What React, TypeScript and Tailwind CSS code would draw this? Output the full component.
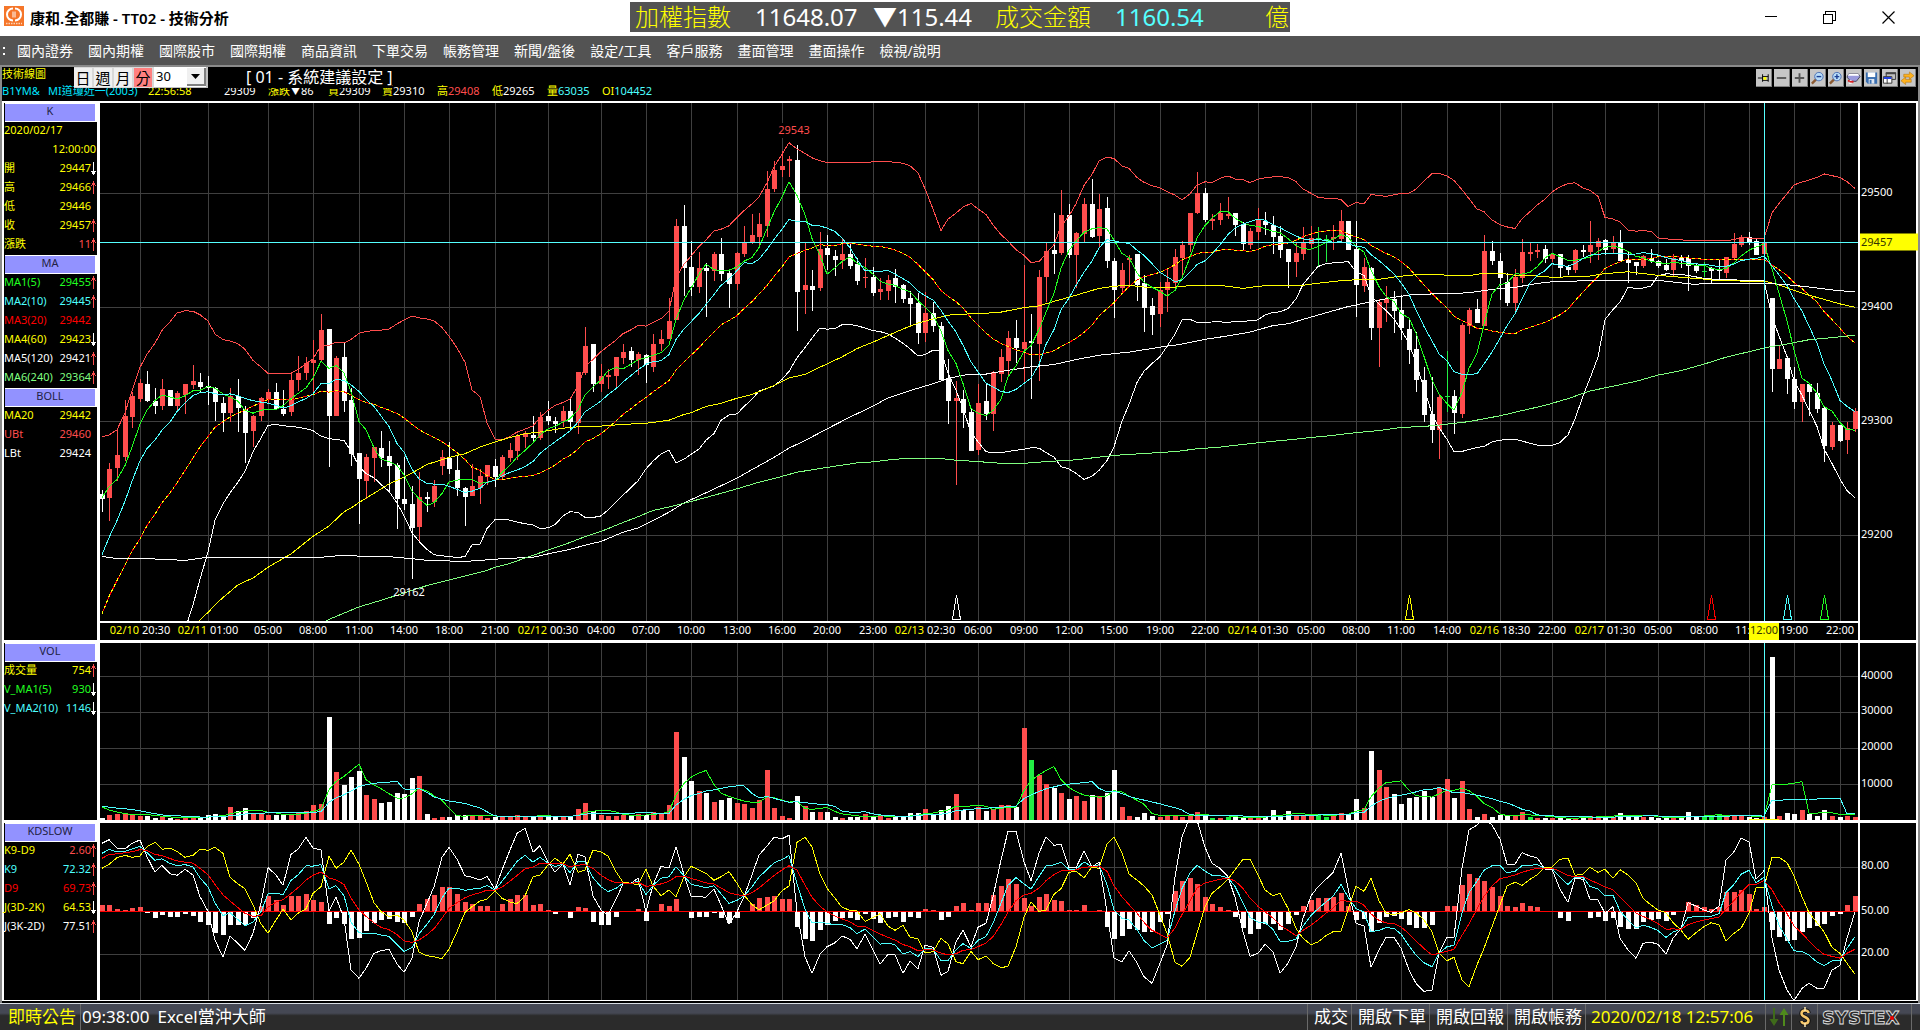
import { useState } from 'react';
import type { ReactNode } from 'react';

type Tone = 'yellow' | 'red' | 'pureRed' | 'green' | 'lime' | 'cyan' | 'white';

const textTone: Record<Tone, string> = {
  yellow: 'text-[#ffff00]',
  red: 'text-[#ff4d4d]',
  pureRed: 'text-[#ff0000]',
  green: 'text-[#20ff20]',
  lime: 'text-[#80ff80]',
  cyan: 'text-[#4dffff]',
  white: 'text-white',
};

const menus = [
  '國內證券', '國內期權', '國際股市', '國際期權', '商品資訊', '下單交易', '帳務管理',
  '新聞/盤後', '設定/工具', '客戶服務', '畫面管理', '畫面操作', '檢視/說明',
];

interface Reading {
  label: string;
  value?: string;
  tone: Tone;
  valueTone?: Tone;
  arrow?: 'up' | 'down';
}

const kReadings: Reading[] = [
  { label: '開', value: '29447', tone: 'yellow', arrow: 'down' },
  { label: '高', value: '29466', tone: 'yellow', arrow: 'up' },
  { label: '低', value: '29446', tone: 'yellow' },
  { label: '收', value: '29457', tone: 'yellow', arrow: 'up' },
  { label: '漲跌', value: '11', tone: 'yellow', valueTone: 'red', arrow: 'up' },
];

const maReadings: Reading[] = [
  { label: 'MA1(5)', value: '29455', tone: 'green', arrow: 'up' },
  { label: 'MA2(10)', value: '29445', tone: 'cyan', arrow: 'up' },
  { label: 'MA3(20)', value: '29442', tone: 'pureRed' },
  { label: 'MA4(60)', value: '29423', tone: 'yellow', arrow: 'down' },
  { label: 'MA5(120)', value: '29421', tone: 'white', arrow: 'up' },
  { label: 'MA6(240)', value: '29364', tone: 'lime', arrow: 'up' },
];

const bollReadings: Reading[] = [
  { label: 'MA20', value: '29442', tone: 'yellow' },
  { label: 'UBt', value: '29460', tone: 'red' },
  { label: 'LBt', value: '29424', tone: 'white' },
];

const volReadings: Reading[] = [
  { label: '成交量', value: '754', tone: 'yellow', arrow: 'up' },
  { label: 'V_MA1(5)', value: '930', tone: 'green', arrow: 'down' },
  { label: 'V_MA2(10)', value: '1146', tone: 'cyan', arrow: 'down' },
];

const kdReadings: Reading[] = [
  { label: 'K9-D9', value: '2.60', tone: 'yellow', valueTone: 'red', arrow: 'up' },
  { label: 'K9', value: '72.32', tone: 'cyan', arrow: 'up' },
  { label: 'D9', value: '69.73', tone: 'pureRed', arrow: 'up' },
  { label: 'J(3D-2K)', value: '64.53', tone: 'yellow', arrow: 'down' },
  { label: 'J(3K-2D)', value: '77.51', tone: 'white', arrow: 'up' },
];

// bar index -> label on the time axis
const timeTicks: { at: number; time: string; date?: string }[] = [
  { at: 5, time: '20:30', date: '02/10' }, { at: 14, time: '01:00', date: '02/11' },
  { at: 22, time: '05:00' }, { at: 28, time: '08:00' }, { at: 34, time: '11:00' },
  { at: 40, time: '14:00' }, { at: 46, time: '18:00' }, { at: 52, time: '21:00' },
  { at: 59, time: '00:30', date: '02/12' }, { at: 66, time: '04:00' }, { at: 72, time: '07:00' },
  { at: 78, time: '10:00' }, { at: 84, time: '13:00' }, { at: 90, time: '16:00' },
  { at: 96, time: '20:00' }, { at: 102, time: '23:00' }, { at: 109, time: '02:30', date: '02/13' },
  { at: 116, time: '06:00' }, { at: 122, time: '09:00' }, { at: 128, time: '12:00' },
  { at: 134, time: '15:00' }, { at: 140, time: '19:00' }, { at: 146, time: '22:00' },
  { at: 153, time: '01:30', date: '02/14' }, { at: 160, time: '05:00' }, { at: 166, time: '08:00' },
  { at: 172, time: '11:00' }, { at: 178, time: '14:00' }, { at: 185, time: '18:30', date: '02/16' },
  { at: 192, time: '22:00' }, { at: 199, time: '01:30', date: '02/17' }, { at: 206, time: '05:00' },
  { at: 212, time: '08:00' }, { at: 218, time: '11:00' }, { at: 224, time: '19:00' },
  { at: 230, time: '22:00' },
];

// One candle per entry: direction, body top, body bottom, high, low.
// Levels count down from the top of the pane, 331 of them to 100 points, 271 = 29500.
const candleData = `
W1143,1158,1133,1196 R1072,1156,1054,1222 R1032,1070,958,1107 R918,1037,870,1047 R860,922,848,952
R822,868,810,878 W825,873,787,876 W873,890,836,912 R839,890,810,900 W842,888,842,890
R852,888,845,900 R826,858,826,912 R816,828,771,838 W820,832,794,848 W831,835,802,886
W835,877,832,932 W881,908,862,964 R861,909,835,935 W860,893,810,964 W896,967,888,1055
R918,961,916,1008 R865,917,862,932 R848,868,840,880 W849,896,823,898 W897,912,843,918
R813,906,795,918 R793,812,742,845 R765,793,745,812 R755,764,697,852 R668,754,621,758
W665,917,665,1066 R749,917,742,917 W746,873,702,906 W871,1027,835,1062 W1025,1102,1025,1230
R1038,1105,1028,1158 R1008,1040,1008,1108 W1010,1040,961,1065 W1035,1062,990,1140 W1061,1158,1055,1246
W1159,1172,1038,1190 W1173,1242,1122,1390 R1153,1240,1080,1285 W1153,1160,1138,1196 R1121,1168,1103,1182
R1038,1062,1016,1088 W1040,1073,994,1085 W1074,1127,1034,1150 W1128,1152,1124,1236 R1121,1149,1058,1150
R1092,1126,1072,1173 R1061,1095,1060,1117 W1063,1095,1042,1123 R1038,1095,1032,1100 R1016,1040,996,1050
R975,1018,970,1045 R966,980,962,1010 W973,982,919,990 R920,981,907,986 W918,931,874,945
W933,941,922,966 R903,933,890,950 W903,934,865,961 R790,937,790,970 R714,793,659,798
W709,824,709,848 R802,824,768,848 R800,804,780,838 R746,801,746,836 R732,749,710,767
W729,755,717,774 R739,756,732,799 W740,771,738,822 R710,774,680,790 R695,710,669,730
R642,693,575,694 R366,640,347,640 W366,488,306,570 W485,543,409,570 R489,542,441,560
W489,497,473,630 R447,497,441,526 W448,504,402,526 W502,534,498,604 R443,534,440,551
R413,447,366,456 R393,413,332,418 R360,399,328,430 R259,366,206,398 R204,258,178,267
R192,203,148,224 R172,177,163,224 W175,558,131,671 R538,551,415,621 W539,551,494,613
R433,547,384,554 W430,450,392,495 W453,465,436,512 R447,466,405,490 W447,482,415,490
W476,526,460,538 R514,518,460,547 W514,560,485,569 R549,559,518,580 R523,555,508,580
W517,543,491,589 W537,577,534,590 W575,592,556,653 W590,677,560,710 R618,677,557,703
W618,656,587,674 W657,813,645,815 W807,874,752,941 R865,874,816,1117 W868,909,843,952
W906,1018,895,1018 R880,1016,824,1030 W874,912,822,928 R790,912,786,961 R746,795,723,820
R691,758,672,798 W691,720,638,765 R703,723,479,820 W700,706,621,868 R514,709,495,816
R438,514,416,587 W435,447,328,505 R334,444,261,450 W334,450,303,460 R386,450,383,547
R302,389,285,412 W302,398,229,402 R317,395,273,430 W314,467,281,488 W467,551,460,633
R494,546,473,560 R460,464,450,544 W447,537,447,584 W532,604,508,674 W598,624,575,683
R553,621,528,659 R528,551,490,616 R456,531,433,545 R421,459,409,512 R328,421,328,441
R270,328,209,330 W270,348,256,354 R346,350,331,378 R328,348,298,363 R330,337,282,345
W328,363,328,395 W360,418,354,437 R380,421,372,433 R346,383,314,406 W351,363,325,392
W363,398,337,447 W395,437,366,459 W433,470,433,546 R444,470,415,514 R413,446,369,464
R401,418,366,433 G402,403,369,484 G404,405,392,470 R398,405,363,436 R351,403,319,412
W351,436,351,436 W433,537,351,630 R486,540,459,558 W488,662,485,697 R588,661,578,775
R578,589,540,645 W578,612,555,677 W610,661,567,697 W665,725,633,767 W723,812,674,848
W813,914,775,935 W912,958,804,996 R862,958,855,1042 G861,862,729,906 W859,909,842,970
R653,911,648,923 R610,655,604,680 W607,648,577,648 R438,656,392,656 W438,467,409,480
W467,517,444,581 W528,589,502,598 R514,589,490,615 R441,517,404,531 R441,446,415,467
R437,440,418,459 W433,462,420,473 R447,462,445,470 W448,487,448,515 W486,494,479,508
R436,494,434,502 W436,440,421,456 R421,441,351,473 R409,428,402,465 W407,436,404,450
R413,433,395,444 W413,467,377,470 W463,473,441,531 W471,482,470,508 R453,482,450,488
W459,468,433,473 W467,482,465,488 W479,494,462,497 R459,494,447,511 W459,467,450,488
W458,482,450,555 W479,497,477,502 G497,498,470,514 W488,497,485,531 W491,497,462,525
R456,502,455,517 R418,459,386,462 R398,420,392,428 W398,412,383,421 W410,450,404,450
R413,447,413,455 W575,780,575,848 R752,780,714,780 W749,809,742,854 W810,877,775,897
R825,877,825,935 W825,848,822,918 W851,897,822,909 W894,1004,891,1051 R944,1007,935,1016
W944,990,944,993 R952,987,935,1028 R903,955,894,964`;

const candles = candleData.trim().split(/\s+/).map((entry) => {
  const [top, bottom, high, low] = entry.slice(1).split(',').map(Number);
  return { dir: entry[0], top, bottom, high, low, close: entry[0] === 'W' ? bottom : top };
});

// closes of the sessions before the first visible candle
const earlierCloses = [
  2080, 1960, 1800, 1680, 1545, 1640, 1560, 1500, 1450, 1431,
  1560, 1530, 1480, 1440, 1415, 1230, 1140, 1120, 1127,
];

// slow averages, sampled as [bar, level]
type Sample = [number, number];

const ma60: Sample[] = [
  [12.8, 1512], [14, 1488], [15.5, 1455], [18, 1408], [20, 1388], [22, 1357], [25, 1318], [28, 1267],
  [30, 1237], [32, 1196], [33, 1185], [34, 1169], [36, 1142], [38, 1115], [40, 1095], [42, 1072],
  [43, 1058], [44, 1052], [46, 1038], [48, 1027], [50, 1008], [52, 993], [54, 980], [56, 969],
  [58, 964], [61, 953], [63, 949], [66, 947], [69, 942], [72, 939], [74, 933], [75, 930], [77, 913],
  [78, 908], [80, 890], [82, 881], [84, 866], [86, 855], [88, 838], [90, 818], [91, 807], [93, 797],
  [95, 776], [98, 746], [100, 722], [102, 703], [104, 684], [106, 665], [108, 648], [110, 636],
  [112, 625], [113, 622], [116, 621], [119, 616], [122, 603], [124, 598], [126, 585], [128, 573],
  [130, 560], [132, 547], [134, 541], [136, 538], [138, 543], [141, 546], [143, 541], [145, 538],
  [148, 538], [151, 547], [153, 541], [155, 538], [159, 538], [161, 532], [163, 527], [165, 523],
  [169, 521], [171, 514], [173, 509], [175, 506], [177, 508], [181, 510], [183, 503], [185, 503],
  [187, 509], [190, 511], [192, 515], [195, 513], [197, 511], [199, 504], [202, 499], [204, 504],
  [206, 509], [209, 515], [212, 520], [214, 525], [218, 526], [220, 526], [222, 537], [224, 553],
  [226, 567], [228, 579], [230, 592], [232, 602],
];

const ma120: Sample[] = [
  [0, 1325], [2, 1332], [4, 1331], [7, 1333], [11, 1337], [13, 1331], [14, 1328], [29, 1328],
  [32, 1322], [35, 1326], [38, 1326], [41, 1332], [43, 1337], [48, 1340], [50, 1337], [53, 1332],
  [57, 1328], [59, 1318], [62, 1305], [64, 1293], [66, 1282], [69, 1255], [71, 1243], [73, 1221],
  [75, 1197], [77, 1170], [79, 1150], [81, 1130], [84, 1098], [87, 1062], [89, 1038], [91, 1011],
  [93, 989], [96, 955], [99, 921], [102, 889], [104, 865], [107, 844], [110, 824], [112, 809],
  [114, 799], [117, 796], [120, 785], [123, 775], [126, 768], [129, 754], [132, 741], [136, 732],
  [140, 718], [143, 709], [146, 695], [149, 685], [152, 674], [155, 655], [157, 650], [159, 637],
  [162, 618], [165, 600], [168, 586], [171, 573], [174, 564], [177, 563], [181, 560], [184, 550],
  [187, 544], [190, 533], [192, 528], [195, 526], [197, 524], [206, 524], [209, 531], [211, 536],
  [212, 532], [220, 532], [224, 538], [227, 546], [230, 554], [232, 556],
];

const ma240: Sample[] = [
  [29.7, 1512], [32, 1490], [34, 1472], [37, 1453], [40, 1432], [43, 1410], [46, 1394], [49, 1377],
  [51, 1366], [52, 1357], [54, 1346], [56, 1330], [59, 1307], [62, 1285], [64, 1268], [66, 1253],
  [68, 1235], [71, 1210], [73, 1192], [75, 1182], [78, 1166], [81, 1148], [84, 1129], [87, 1110],
  [90, 1093], [92, 1081], [96, 1067], [100, 1054], [102, 1051], [105, 1043], [108, 1040],
  [111, 1041], [113, 1046], [116, 1050], [119, 1055], [122, 1055], [125, 1050], [129, 1045],
  [134, 1032], [139, 1025], [142, 1021], [145, 1013], [148, 1008], [151, 1000], [155, 991],
  [157, 987], [160, 980], [163, 974], [166, 966], [169, 960], [172, 951], [175, 948], [177, 944],
  [181, 934], [185, 917], [188, 902], [191, 887], [194, 867], [197, 845], [200, 831], [203, 817],
  [206, 799], [209, 786], [212, 767], [215, 747], [218, 731], [220, 720], [223, 709], [226, 696],
  [229, 690], [232, 683],
];

// volume, 108 = 10000 lots
const volumes = [
  6, 16, 19, 22, 16, 12, 12, 7, 10, 5, 4, 9, 6, 9, 16, 19, 12, 40, 28, 37, 19, 19, 14, 16, 16,
  18, 22, 28, 46, 49, 310, 145, 106, 130, 147, 76, 64, 52, 55, 82, 77, 127, 133, 19, 7, 9, 10, 16, 16, 16,
  12, 7, 10, 8, 9, 16, 10, 12, 16, 9, 9, 9, 10, 34, 52, 28, 16, 13, 13, 16, 12, 18, 16, 25, 22,
  46, 265, 190, 118, 88, 82, 55, 61, 67, 52, 49, 37, 61, 151, 37, 13, 7, 73, 43, 25, 25, 25, 10, 7, 9,
  10, 19, 10, 13, 7, 10, 8, 22, 22, 34, 19, 31, 43, 79, 31, 28, 40, 28, 34, 46, 46, 40, 277, 181, 136,
  109, 97, 82, 64, 73, 58, 76, 73, 82, 151, 40, 13, 10, 22, 13, 10, 13, 16, 10, 13, 25, 16, 6, 7, 9,
  10, 8, 5, 9, 10, 31, 10, 28, 13, 13, 13, 19, 10, 16, 22, 19, 64, 37, 208, 151, 100, 79, 49, 67, 70,
  88, 70, 97, 124, 67, 118, 34, 10, 19, 10, 16, 13, 13, 25, 10, 7, 5, 5, 7, 5, 6, 9, 13, 13, 13,
  9, 22, 16, 10, 8, 10, 6, 6, 7, 7, 25, 8, 13, 16, 19, 10, 12, 13, 10, 5, 8, 490, 13, 22, 19,
  31, 19, 13, 31, 13, 10, 13, 10,
];
const earlierVolumes = [45, 45, 45, 38, 45, 60, 50, 45, 34];
const flatVolumeBars = new Set([123, 147, 149, 161, 162, 189, 212, 213, 214]);

// KD oscillator: J(3K-2D) and J(3D-2K); 904 is the 50 line, 4.35 per point
const jFast = [
  700, 689, 714, 717, 700, 690, 740, 787, 766, 791, 796, 778, 795, 860, 904, 990, 1042, 979, 1000, 1021,
  970, 880, 773, 795, 826, 733, 718, 682, 714, 720, 902, 862, 925, 1080, 1105, 1075, 1030, 1022, 1018, 1062,
  1087, 1045, 935, 880, 830, 742, 712, 748, 797, 802, 810, 799, 838, 780, 720, 670, 655, 727, 707, 755,
  787, 762, 825, 733, 740, 858, 900, 916, 868, 822, 820, 805, 905, 825, 769, 774, 710, 795, 859, 860,
  862, 838, 885, 943, 905, 860, 795, 735, 708, 682, 686, 676, 905, 1040, 1090, 1033, 1010, 998, 978, 988,
  1016, 973, 1020, 1063, 1033, 1034, 1090, 1053, 1076, 1006, 1012, 1096, 1084, 995, 961, 1010, 952, 940, 860, 750,
  664, 664, 755, 812, 730, 680, 706, 703, 773, 773, 724, 770, 757, 905, 1045, 1055, 1022, 1058, 1100, 1120,
  1060, 1005, 800, 680, 620, 630, 712, 760, 775, 800, 862, 965, 1039, 1030, 1003, 1025, 1090, 1060, 1010, 925,
  858, 830, 808, 788, 730, 835, 940, 948, 1072, 1020, 982, 982, 1015, 1080, 1120, 1144, 1140, 1030, 982, 982,
  775, 660, 645, 625, 645, 688, 762, 762, 728, 738, 743, 778, 778, 838, 877, 805, 808, 868, 870, 910,
  890, 985, 1020, 1045, 1000, 997, 1003, 1032, 985, 955, 878, 888, 900, 907, 888, 750, 725, 685, 695, 808,
  782, 985, 1080, 1140, 1172, 1135, 1120, 1135, 1135, 1080, 1066, 985, 905,
];
const jSlow = [
  775, 763, 743, 736, 742, 738, 710, 697, 718, 715, 724, 742, 736, 718, 721, 712, 730, 802, 822, 836,
  885, 942, 970, 930, 898, 929, 910, 896, 850, 830, 738, 775, 756, 720, 763, 815, 878, 905, 920, 915,
  930, 965, 1027, 1037, 1040, 1046, 1017, 965, 907, 890, 873, 868, 842, 865, 876, 881, 858, 800, 795, 765,
  745, 762, 733, 787, 780, 720, 726, 738, 785, 817, 820, 825, 778, 828, 857, 840, 860, 800, 769, 780,
  790, 811, 800, 785, 820, 855, 884, 900, 885, 873, 842, 828, 697, 682, 710, 793, 835, 865, 892, 901,
  903, 934, 923, 911, 948, 961, 946, 982, 986, 1028, 1025, 985, 1002, 1055, 1061, 1024, 1049, 1038, 1060, 1073,
  1069, 1010, 922, 875, 904, 900, 853, 836, 787, 784, 803, 771, 775, 703, 682, 730, 792, 810, 828, 855,
  915, 970, 1057, 1069, 1042, 970, 890, 850, 830, 808, 780, 748, 748, 795, 840, 857, 850, 895, 955, 985,
  1004, 996, 977, 965, 964, 900, 829, 844, 805, 872, 910, 914, 908, 899, 908, 930, 965, 1030, 1052, 1042,
  1110, 1130, 1065, 1015, 950, 885, 828, 817, 826, 808, 795, 772, 772, 748, 744, 796, 793, 772, 787, 778,
  805, 779, 795, 818, 865, 885, 900, 908, 938, 960, 988, 968, 950, 938, 944, 994, 970, 955, 910, 834,
  832, 742, 742, 758, 798, 860, 908, 938, 965, 1012, 1030, 1060, 1093,
];

const PLOT_W = 1758;
const CURSOR = 220;

const barX = (i: number) => Math.round(1.9 + i * 7.555);
const priceY = (level: number) => level / 2.904 - 3;
const volumeY = (v: number) => 177 - v / 3;
const kdY = (level: number) => level / 3 - 213;

const toPoints = (values: number[], y: (v: number) => number) =>
  values.map((v, i) => `${barX(i)},${y(v).toFixed(1)}`).join(' ');

const samplePoints = (samples: Sample[]) =>
  samples.map(([i, v]) => `${barX(i)},${priceY(v).toFixed(1)}`).join(' ');

function average(values: number[], earlier: number[], span: number) {
  const all = [...earlier, ...values];
  return values.map((_, i) => {
    const end = i + earlier.length + 1;
    const part = all.slice(Math.max(0, end - span), end);
    return part.reduce((a, b) => a + b, 0) / part.length;
  });
}

function deviation(values: number[], earlier: number[], span: number) {
  const all = [...earlier, ...values];
  return values.map((_, i) => {
    const part = all.slice(i + earlier.length + 1 - span, i + earlier.length + 1);
    const mean = part.reduce((a, b) => a + b, 0) / part.length;
    return Math.sqrt(part.reduce((a, b) => a + (b - mean) ** 2, 0) / part.length);
  });
}

const closes = candles.map((c) => c.close);
const ma5 = average(closes, earlierCloses, 5);
const ma10 = average(closes, earlierCloses, 10);
const ma20 = average(closes, earlierCloses, 20);
const sd20 = deviation(closes, earlierCloses, 20);
const upperBand = ma20.map((m, i) => m - 2 * sd20[i]);
const lowerBand = ma20.map((m, i) => m + 2 * sd20[i]);

const kLine = jFast.map((j, i) => (3 * j + 2 * jSlow[i]) / 5);
const dLine = jFast.map((j, i) => (2 * j + 3 * jSlow[i]) / 5);
const kdGap = jFast.map((j, i) => ((jSlow[i] - j) / 5) * 1.17);

const fills: Record<string, string> = { R: '#ff4d4d', W: '#ffffff', G: '#22ee44' };

function Line({ points, color, dash }: { points: string; color: string; dash?: string }) {
  return <polyline points={points} fill="none" stroke={color} strokeDasharray={dash} />;
}

function Plot({ height, levels, children }: { height: number; levels: number[]; children: ReactNode }) {
  return (
    <svg
      viewBox={`0 0 ${PLOT_W} ${height}`}
      preserveAspectRatio="none"
      shapeRendering="crispEdges"
      className="absolute inset-0 block h-full w-full"
    >
      {timeTicks.map((t) => (
        <rect key={t.at} x={barX(t.at)} y={0} width={1} height={height} fill="#3f3f3f" />
      ))}
      {levels.map((y) => (
        <rect key={y} x={0} y={y} width={PLOT_W} height={1} fill="#3f3f3f" />
      ))}
      {children}
      <rect x={barX(CURSOR)} y={0} width={1} height={height} fill="#55ffff" />
    </svg>
  );
}

const signals: [number, string][] = [
  [113, '#ffffff'], [173, '#ffff00'], [213, '#ff0000'], [223, '#4dffff'], [228, '#20ff20'],
];

function PricePlot() {
  return (
    <Plot height={518} levels={[90, 204, 318, 432]}>
      <rect x={678} y={20} width={32} height={15} fill="#000" />
      <rect x={294} y={482} width={32} height={15} fill="#000" />
      {candles.map((c, i) => (
        <g key={i} fill={fills[c.dir]}>
          <rect x={barX(i)} y={priceY(c.high)} width={1} height={(c.low - c.high) / 2.904} />
          <rect x={barX(i) - 2} y={priceY(c.top)} width={5} height={Math.max(1, (c.bottom - c.top) / 2.904)} />
        </g>
      ))}
      <Line points={toPoints(ma20, priceY)} color="#ff0000" />
      <Line points={toPoints(ma20, priceY)} color="#ffff00" dash="3 3" />
      <Line points={toPoints(upperBand, priceY)} color="#ff4d4d" />
      <Line points={toPoints(lowerBand, priceY)} color="#ffffff" />
      <Line points={samplePoints(ma60)} color="#ffff00" />
      <Line points={samplePoints(ma120)} color="#ffffff" />
      <Line points={samplePoints(ma240)} color="#80ff80" />
      <Line points={toPoints(ma5, priceY)} color="#20ff20" />
      <Line points={toPoints(ma10, priceY)} color="#4dffff" />
      {signals.map(([at, color]) => (
        <path
          key={at}
          d={`M${barX(at) + 0.5} 492 L${barX(at) - 3.5} 516.5 H${barX(at) + 4.5} Z`}
          fill="none"
          stroke={color}
        />
      ))}
      <rect x={0} y={139} width={PLOT_W} height={1} fill="#55ffff" />
      <text x={694} y={31} textAnchor="middle" fontSize={11} fill="#ff4d4d">29543</text>
      <text x={309} y={493} textAnchor="middle" fontSize={11} fill="#ffffff">29162</text>
    </Plot>
  );
}

function VolumePlot() {
  return (
    <Plot height={177} levels={[33, 69, 105, 141]}>
      {volumes.map((v, i) => (
        <rect
          key={i}
          x={barX(i) - 2}
          y={volumeY(v)}
          width={5}
          height={v / 3}
          fill={fills[flatVolumeBars.has(i) ? 'G' : candles[i].dir === 'G' ? 'R' : candles[i].dir]}
        />
      ))}
      <Line points={toPoints(average(volumes, earlierVolumes, 5), volumeY)} color="#20ff20" />
      <Line points={toPoints(average(volumes, earlierVolumes, 10), volumeY)} color="#4dffff" />
      <rect x={barX(CURSOR) - 15} y={176} width={30} height={1} fill="#ffff00" />
    </Plot>
  );
}

function KdPlot() {
  return (
    <Plot height={177} levels={[44, 131]}>
      {kdGap.map((gap, i) => (
        <rect
          key={i}
          x={barX(i) - 2}
          y={gap > 0 ? 88 - gap / 3 : 88}
          width={5}
          height={Math.abs(gap) / 3}
          fill={gap > 0 ? '#ff4d4d' : '#ffffff'}
        />
      ))}
      <rect x={0} y={88} width={PLOT_W} height={1} fill="#ff0000" />
      <Line points={toPoints(jSlow, kdY)} color="#ffff00" />
      <Line points={toPoints(jFast, kdY)} color="#ffffff" />
      <Line points={toPoints(kLine, kdY)} color="#4dffff" />
      <Line points={toPoints(dLine, kdY)} color="#ff0000" />
    </Plot>
  );
}

function TrendArrow({ dir }: { dir: 'up' | 'down' }) {
  return dir === 'up' ? (
    <svg width="5" height="13" viewBox="0 0 5 13" fill="#ff4d4d" shapeRendering="crispEdges">
      <path d="M2 0h1v13H2zM1 2h3v2H1zM0 4h1v1H0zM4 4h1v1H4z" />
    </svg>
  ) : (
    <svg width="5" height="13" viewBox="0 0 5 13" fill="#fff" shapeRendering="crispEdges">
      <path d="M2 0h1v13H2zM1 10h3v2H1zM0 9h5v1H0z" />
    </svg>
  );
}

function Section({ title, readings, children }: { title: string; readings: Reading[]; children?: ReactNode }) {
  return (
    <section>
      <h2 className="ml-px h-[19px] border-y border-r-2 border-white bg-[#9292ff] text-center text-[11px] leading-[13px] text-[#222244]">
        {title}
      </h2>
      {children}
      <table className="w-full border-collapse text-[11px] leading-[16px]">
        <tbody>
          {readings.map((r) => (
            <tr key={r.label} className="h-[19px] align-top">
              <th scope="row" className={`p-0 text-left font-normal whitespace-nowrap ${textTone[r.tone]}`}>{r.label}</th>
              <td className={`p-0 text-right ${textTone[r.valueTone ?? r.tone]}`}>{r.value}</td>
              <td className="w-[6px] p-0 pt-[2px]">{r.arrow && <TrendArrow dir={r.arrow} />}</td>
            </tr>
          ))}
        </tbody>
      </table>
    </section>
  );
}

function AxisLabel({ top, children }: { top: string; children: ReactNode }) {
  return <span className={`absolute left-px -translate-y-1/2 ${top}`}>{children}</span>;
}

function ToolButton({ label, children }: { label: string; children: ReactNode }) {
  return (
    <button type="button" aria-label={label} className="h-[18px] w-4 border-r border-b border-[#808080] bg-[#c6c6c6]">
      <svg viewBox="0 0 16 16" className="block h-4 w-[15px]">{children}</svg>
    </button>
  );
}

function Toolbar() {
  const [period, setPeriod] = useState('分');
  return (
    <div className="relative z-10 flex h-[21px] items-start">
      <span className="w-[72px] text-[11px] leading-[14px] text-[#ffff00]">技術線圖</span>
      <div className="flex h-[21px] items-center gap-[2px] bg-[#d8d8d8] pr-[2px]">
        {['日', '週', '月', '分'].map((p) => (
          <button
            key={p}
            type="button"
            aria-pressed={period === p}
            onClick={() => setPeriod(p)}
            className={`h-[19px] w-[18px] text-center text-[15px] leading-[18px] text-black ${
              period === p ? 'bg-[#ff8080]' : 'bg-[#f0f0f0]'
            }`}
          >
            {p}
          </button>
        ))}
      </div>
      <div className="relative h-[21px] w-[54px] border-r-2 border-b border-[#c0c0c0] bg-white">
        <select
          aria-label="分鐘"
          defaultValue="30"
          className="block h-[20px] w-full appearance-none bg-transparent pb-[2px] pl-[2px] text-[13px] leading-[18px] text-black"
        >
          <option>5</option>
          <option>15</option>
          <option>30</option>
          <option>60</option>
        </select>
        <span className="pointer-events-none absolute top-px right-0 flex h-[18px] w-[19px] items-center justify-center border-r-2 border-b-2 border-[#808080] bg-[#f0f0f0]">
          <svg width="9" height="5" viewBox="0 0 9 5"><path d="M0 0h9L4.5 5z" /></svg>
        </span>
      </div>
      <h1 className="h-[21px] w-[184px] bg-black pl-[38px] text-[16px] leading-[21px] whitespace-nowrap text-white">
        [ 01 - 系統建議設定 ]
      </h1>
      <div className="ml-auto flex gap-[2px] pt-[2px] pr-[2px]">
        <ToolButton label="釘選">
          <path d="M2 8h5M7 4v8M13 4v8M7 6.5h6M7 10.5h6" stroke="#000" fill="none" />
          <path d="M8 7h3v3H8z" fill="#ff0" />
        </ToolButton>
        <ToolButton label="縮短"><path d="M3 7h10v2H3z" fill="#555" /></ToolButton>
        <ToolButton label="加長"><path d="M3 7h10v2H3zM7 3h2v10H7z" fill="#555" /></ToolButton>
        <ToolButton label="縮小">
          <path d="M2 14l5-5" stroke="#8b5a33" strokeWidth="2.5" />
          <circle cx="9.5" cy="6.5" r="4.5" fill="#b8dcf8" stroke="#4a6fb5" />
          <path d="M7 6.5h5" stroke="#1c3f94" strokeWidth="1.5" />
        </ToolButton>
        <ToolButton label="放大">
          <path d="M2 14l5-5" stroke="#8b5a33" strokeWidth="2.5" />
          <circle cx="9.5" cy="6.5" r="4.5" fill="#b8dcf8" stroke="#4a6fb5" />
          <path d="M7 6.5h5M9.5 4v5" stroke="#1c3f94" strokeWidth="1.5" />
        </ToolButton>
        <ToolButton label="清除">
          <path d="M3 3.500h10l2 3-4 5H5L1 7z" fill="#9a9adc" stroke="#445" />
          <path d="M3 3.500h10l1 2H2z" fill="#fff" />
          <path d="M2 10h2v1h2v2H4v-1H2zM6 11h2v2H6z" fill="#d22" />
          <path d="M4 10h2v1H4zM3 13h3v1H3z" fill="#fff" />
        </ToolButton>
        <ToolButton label="儲存">
          <path d="M2 2h12v12H4l-2-2z" fill="#3a6fb0" />
          <path d="M4 2h8v5H4z" fill="#fff" />
          <path d="M5 9h6v5H5z" fill="#dde6f2" />
          <path d="M6 10h2v4H6z" fill="#3a6fb0" />
        </ToolButton>
        <ToolButton label="視窗">
          <path d="M4.5 2.5h10v7h-10z" fill="#c0c0c0" stroke="#333" />
          <path d="M4 2h11v2H4z" fill="#444" />
          <path d="M1.5 6.5h9v7h-9z" fill="#fff" stroke="#333" />
          <path d="M2 7h8v2H2z" fill="#1536e0" />
          <path d="M5.5 9v5" stroke="#333" />
        </ToolButton>
        <ToolButton label="切換">
          <path d="M4 4h6V1.5l5 4-5 4V7H4z" fill="#ffb21e" stroke="#a86800" strokeWidth="0.5" />
          <path d="M12 9.500H6V7l-5 4 5 4v-2.500h6z" fill="#ffb21e" stroke="#a86800" strokeWidth="0.5" />
        </ToolButton>
      </div>
    </div>
  );
}

function QuoteRow() {
  return (
    <div className="-mt-[5px] flex h-[18px] text-[11px] leading-[15px] whitespace-nowrap text-white">
      <span className="w-[46px] text-[#00e5ff]">B1YM&amp;</span>
      <span className="w-[100px] text-[#00e5ff]">MI道瓊近一(2003)</span>
      <span className="w-[76px] text-[#ffff00]">22:56:58</span>
      <span className="w-11">29309</span>
      <span className="w-[60px]"><b className="font-normal text-[#ffff00]">漲跌</b>▼86</span>
      <span className="w-[54px]"><b className="font-normal text-[#ffff00]">買</b>29309</span>
      <span className="w-[55px]"><b className="font-normal text-[#ffff00]">賣</b>29310</span>
      <span className="w-[55px] text-[#ff4d4d]"><b className="font-normal text-[#ffff00]">高</b>29408</span>
      <span className="w-[55px]"><b className="font-normal text-[#ffff00]">低</b>29265</span>
      <span className="w-[55px] text-[#4dffff]"><b className="font-normal text-[#ffff00]">量</b>63035</span>
      <span className="text-[#4dffff]"><b className="font-normal text-[#ffff00]">OI</b>104452</span>
    </div>
  );
}

function StatusBar() {
  const divider = 'border-l border-[#6a6a6a] pl-[6px]';
  return (
    <footer className="flex h-[26px] items-center bg-linear-to-b from-[#454854] from-35% to-[#2b2b2b] to-45% text-[17px] leading-[26px] whitespace-nowrap text-white">
      <span className="w-20 pl-2 text-[#ffff00]">即時公告</span>
      <span className="border-l border-[#6a6a6a] pl-px">09:38:00</span>
      <span className="pl-2">Excel當沖大師</span>
      <div className="ml-auto flex">
        <button type="button" className={`w-11 text-left ${divider}`}>成交</button>
        <button type="button" className={`w-[78px] text-left ${divider}`}>開啟下單</button>
        <button type="button" className={`w-[78px] text-left ${divider}`}>開啟回報</button>
        <button type="button" className={`w-[78px] text-left ${divider}`}>開啟帳務</button>
        <time className="w-[180px] border-l border-[#6a6a6a] pl-[5px] text-[#ffff00]">2020/02/18 12:57:06</time>
        <span className="flex w-[26px] items-center justify-center border-l border-[#6a6a6a]">
          <svg width="20" height="20" viewBox="0 0 20 20" fill="#4f8a1c">
            <path d="M4 1h2v11h3.500L5 19 .5 12H4z" fill="#3f6b1a" />
            <path d="M14 19h2V8h3.500L15 1l-4.500 7H14z" />
          </svg>
        </span>
        <span className="flex w-[26px] items-center justify-center border-l border-[#6a6a6a]">
          <svg width="12" height="20" viewBox="0 0 12 20" fill="none">
            <path d="M9.500 6C9.500 2.500 2.500 2.500 2.500 6.500S9.500 9.500 9.500 13.500 2.500 17.500 2.500 14" stroke="#111" strokeWidth="4.5" />
            <path d="M9.500 6C9.500 2.500 2.500 2.500 2.500 6.500S9.500 9.500 9.500 13.500 2.500 17.500 2.500 14" stroke="#f5c66a" strokeWidth="2.5" />
            <path d="M6 0v4M6 16v4" stroke="#ffe9b0" strokeWidth="1.5" />
          </svg>
        </span>
        <span className="w-[94px] border-l border-[#6a6a6a]">
          <svg width="88" height="26" viewBox="0 0 88 26" className="ml-1 block">
            <text x="0" y="20" fontSize="18" fontWeight="700" fill="#2b2b2b" stroke="#e8e8e8" strokeWidth="0.8" className="font-['DejaVu_Sans',sans-serif]">
              SYSTEX
            </text>
            <circle cx="70" cy="14" r="2" fill="#e00" />
          </svg>
        </span>
        <span className="w-[9px] border-l border-[#6a6a6a]" />
      </div>
    </footer>
  );
}

export default function App() {
  return (
    <div className="flex h-screen min-h-[600px] flex-col overflow-hidden bg-black font-['Noto_Sans','Noto_Sans_CJK_TC',sans-serif]">
      <header className="relative flex h-9 shrink-0 items-center bg-white">
        <svg width="20" height="20" viewBox="0 0 20 20" className="-mt-1 ml-1">
          <rect width="20" height="20" fill="#f5762a" />
          <path d="M9 2.500a6 6 0 0 0 0 12M11 2.500a6 6 0 0 1 0 12" fill="none" stroke="#fff" strokeWidth="2" />
          <path d="M9 5.500v6M11 5.500v6" stroke="#fff" strokeWidth="1" />
          <path d="M2 17.500h16" stroke="#fbd3b8" strokeWidth="1.5" strokeDasharray="1.5 1" />
        </svg>
        <p className="ml-[6px] text-[15px] font-semibold text-black">康和.全都賺 - TT02 - 技術分析</p>
        <div className="absolute top-[2px] left-1/2 flex h-[30px] w-[660px] -translate-x-1/2 items-center bg-[#535353] pr-px pl-[5px] text-[24px] leading-[30px] whitespace-nowrap text-white">
          <span className="w-[120px] font-light text-[#ffff00]">加權指數</span>
          <span className="w-[118px]">11648.07</span>
          <span className="w-[122px]">▼115.44</span>
          <span className="w-[120px] font-light text-[#ffff00]">成交金額</span>
          <span className="text-[#55ffff]">1160.54</span>
          <span className="ml-auto font-light text-[#ffff00]">億</span>
        </div>
        <div className="ml-auto flex items-center pr-[2px]">
          <button type="button" aria-label="最小化" className="flex h-8 w-[58px] items-center justify-center">
            <svg width="12" height="12" viewBox="0 0 12 12" shapeRendering="crispEdges"><path d="M0 4h12v1H0z" /></svg>
          </button>
          <button type="button" aria-label="還原" className="-mt-[2px] flex h-8 w-[58px] items-center justify-center">
            <svg width="13" height="13" viewBox="0 0 13 13" fill="none" stroke="#000" shapeRendering="crispEdges">
              <path d="M.5 3.500h9v9h-9zM2.500 3V.5h10v9H10" />
            </svg>
          </button>
          <button type="button" aria-label="關閉" className="-mt-[2px] flex h-8 w-[60px] items-center justify-center">
            <svg width="13" height="13" viewBox="0 0 13 13" stroke="#000" strokeWidth="1.2"><path d="M.5.5l12 12M12.5.5l-12 12" /></svg>
          </button>
        </div>
      </header>

      <nav className="flex h-[31px] shrink-0 items-center gap-[15px] border-b-2 border-[#8a8a8a] bg-[#535353] text-[14px] leading-[29px] whitespace-nowrap text-white">
        <span className="-mr-[3px] ml-[3px] flex w-[2px] flex-col gap-1">
          <i className="h-[2px] w-[2px] bg-white" />
          <i className="h-[2px] w-[2px] bg-white" />
        </span>
        {menus.map((m) => (
          <button key={m} type="button">{m}</button>
        ))}
      </nav>

      <main className="flex min-h-0 grow flex-col border-x-2 border-[#8a8a8a]">
        <div className="h-[34px] shrink-0">
          <Toolbar />
          <QuoteRow />
        </div>

        <div className="mb-[2px] grid min-h-0 grow grid-rows-[537fr_177fr_177fr] gap-[3px] border-x-2 border-t-2 border-b border-white bg-white text-[11px] text-white">
          <div className="flex min-h-0">
            <aside className="w-[93px] shrink-0 bg-black">
              <Section title="K" readings={kReadings}>
                <div className="text-[11px] text-[#ffff00]">
                  <p className="h-[19px] leading-[16px]">2020/02/17</p>
                  <p className="h-[19px] pr-px text-right leading-[16px]">12:00:00</p>
                </div>
              </Section>
              <Section title="MA" readings={maReadings} />
              <Section title="BOLL" readings={bollReadings} />
            </aside>
            <div className="ml-[3px] flex grow flex-col">
              <div className="relative grow bg-black"><PricePlot /></div>
              <div className="relative mt-[2px] h-[17px] overflow-hidden bg-black leading-[14px] whitespace-nowrap">
                {timeTicks.map((t) => (
                  <span
                    key={t.at}
                    className="absolute top-0 -translate-x-1/2"
                    style={{ left: `${(barX(t.at) / PLOT_W) * 100}%` }}
                  >
                    {t.date && <b className="mr-[3px] font-normal text-[#ffff00]">{t.date}</b>}
                    {t.time}
                  </span>
                ))}
                <span
                  className="absolute top-0 h-full w-[30px] -translate-x-1/2 bg-[#ffff00] text-center text-[#333300]"
                  style={{ left: `${(barX(CURSOR) / PLOT_W) * 100}%` }}
                >
                  12:00
                </span>
              </div>
            </div>
            <div className="relative ml-[2px] w-[56px] shrink-0 bg-black">
              <AxisLabel top="top-[16.5%]">29500</AxisLabel>
              <AxisLabel top="top-[37.8%]">29400</AxisLabel>
              <AxisLabel top="top-[59%]">29300</AxisLabel>
              <AxisLabel top="top-[80.3%]">29200</AxisLabel>
              <span className="absolute top-[25.9%] left-0 h-[17px] w-[58px] -translate-y-1/2 bg-[#ffff00] pl-px leading-[16px] text-[#333300]">
                29457
              </span>
            </div>
          </div>

          <div className="flex min-h-0">
            <aside className="w-[93px] shrink-0 bg-black"><Section title="VOL" readings={volReadings} /></aside>
            <div className="relative ml-[3px] grow bg-black"><VolumePlot /></div>
            <div className="relative ml-[2px] w-[56px] shrink-0 bg-black">
              <AxisLabel top="top-[18%]">40000</AxisLabel>
              <AxisLabel top="top-[38%]">30000</AxisLabel>
              <AxisLabel top="top-[58%]">20000</AxisLabel>
              <AxisLabel top="top-[79%]">10000</AxisLabel>
            </div>
          </div>

          <div className="flex min-h-0">
            <aside className="w-[93px] shrink-0 bg-black"><Section title="KDSLOW" readings={kdReadings} /></aside>
            <div className="relative ml-[3px] grow bg-black"><KdPlot /></div>
            <div className="relative ml-[2px] w-[56px] shrink-0 bg-black">
              <AxisLabel top="top-[24%]">80.00</AxisLabel>
              <AxisLabel top="top-[49%]">50.00</AxisLabel>
              <AxisLabel top="top-[73%]">20.00</AxisLabel>
            </div>
          </div>
        </div>
      </main>
      <div className="h-px shrink-0 bg-[#d8dde4]" />
      <StatusBar />
    </div>
  );
}
